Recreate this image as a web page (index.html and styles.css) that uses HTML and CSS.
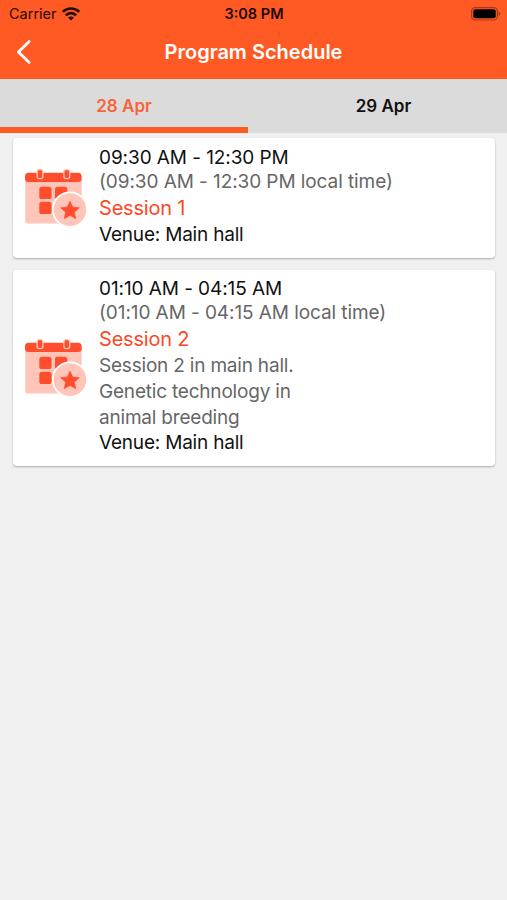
FILE: index.html
```html
<!DOCTYPE html>
<html lang="en">
<head>
  <meta charset="UTF-8">
  <meta name="viewport" content="width=device-width, initial-scale=1.0">
  <title>Program Schedule</title>
  <link rel="stylesheet" href="styles.css">
</head>
<body>
  <header>
    <div class="status-bar">
      <div class="carrier">
        <span>Carrier</span>
        <svg width="18" height="14" viewBox="0 0 18 14" fill="none" stroke="#240c03" stroke-width="2.6">
          <path d="M.8 4.9a11.6 11.6 0 0 1 16.4 0"/>
          <path d="M3.8 8.3a7.3 7.3 0 0 1 10.4 0"/>
          <path d="M9 13.6L6.1 10.7a4 4 0 0 1 5.8 0z" fill="#240c03" stroke="none"/>
        </svg>
      </div>
      <span class="clock">3:08 PM</span>
      <svg class="battery" width="30" height="14" viewBox="0 0 30 14">
        <rect x="0.6" y="0.6" width="25.8" height="12.4" rx="3.6" fill="none" stroke="#a63a18" stroke-width="1.2"/>
        <rect x="2.3" y="2.3" width="22.4" height="9" rx="2" fill="#000"/>
        <path d="M27.6 4.7c2.2.7 2.2 3.5 0 4.2z" fill="#a63a18"/>
      </svg>
    </div>
    <div class="nav-bar">
      <svg class="back" width="16" height="26" viewBox="0 0 16 26" fill="none" stroke="#fff" stroke-width="2.8" stroke-linecap="round" stroke-linejoin="round">
        <path d="M13.2 2.6L2.4 13l10.8 10.4"/>
      </svg>
      <h1>Program Schedule</h1>
    </div>
  </header>

  <nav class="tabs">
    <a class="tab active">28 Apr</a>
    <a class="tab">29 Apr</a>
  </nav>

  <!-- calendar icon used by every session -->
  <svg class="sprite" width="0" height="0">
    <symbol id="calendar" viewBox="0 0 64 60">
      <path d="M1.3 9h56.4v44.5a2 2 0 0 1-2 2H3.3a2 2 0 0 1-2-2z" fill="#ffc5b9"/>
      <rect x="1" y="4.7" width="56.6" height="9.3" rx="3.5" fill="#ff4d2e"/>
      <rect x="13.1" y="1.7" width="5.8" height="8.9" rx="2" fill="#ff4d2e" stroke="#ffc5b9" stroke-width="1.3"/>
      <rect x="39.9" y="1.7" width="5.8" height="8.9" rx="2" fill="#ff4d2e" stroke="#ffc5b9" stroke-width="1.3"/>
      <rect x="15.3" y="18.8" width="12.3" height="12.2" rx="2.6" fill="#ff4d2e"/>
      <rect x="31" y="18.8" width="12.3" height="12.2" rx="2.6" fill="#ff4d2e"/>
      <rect x="15.3" y="33.8" width="12.3" height="12.2" rx="2.6" fill="#ff4d2e"/>
      <circle cx="46" cy="41.6" r="17.2" fill="#ffc5b9" stroke="#fff" stroke-width="1.8"/>
      <path d="M46 33l2.7 6 6.6.7-4.9 4.5 1.4 6.5-5.8-3.3-5.8 3.3 1.4-6.5-4.9-4.5 6.6-.7z" fill="#ff4d2e" stroke="#ff4d2e" stroke-width=".6" stroke-linejoin="round"/>
    </symbol>
  </svg>

  <main>
    <div class="card">
      <svg class="icon"><use href="#calendar"/></svg>
      <div class="info">
        <div class="time">09:30 AM - 12:30 PM</div>
        <div class="local">(09:30 AM - 12:30 PM local time)</div>
        <div class="title">Session 1</div>
        <div class="venue">Venue: Main hall</div>
      </div>
    </div>

    <div class="card">
      <svg class="icon"><use href="#calendar"/></svg>
      <div class="info">
        <div class="time">01:10 AM - 04:15 AM</div>
        <div class="local">(01:10 AM - 04:15 AM local time)</div>
        <div class="title">Session 2</div>
        <div class="description">Session 2 in main hall.<br>Genetic technology in<br>animal breeding</div>
        <div class="venue">Venue: Main hall</div>
      </div>
    </div>
  </main>
</body>
</html>
```

FILE: styles.css
```css
* {
  box-sizing: border-box;
}

body {
  margin: 0;
  min-height: 100vh;
  background-color: #f0f0f0;
  color: #111;
  font-family: 'Inter', 'Liberation Sans', sans-serif;
}

header {
  height: 79px;
  background-color: #ff5a23;
}

.status-bar {
  display: grid;
  grid-template-columns: 1fr auto 1fr;
  align-items: center;
  height: 27px;
  padding: 0 6px 0 9px;
  color: #240c03;
  font-size: 14.5px;
}

.carrier {
  display: flex;
  align-items: center;
  gap: 5px;
}

.clock {
  margin-right: 2px;
  font-weight: 600;
  color: #1c0a03;
}

.battery {
  justify-self: end;
}

.nav-bar {
  display: grid;
  grid-template-columns: 40px 1fr 40px;
  align-items: center;
  height: 50px;
}

.back {
  margin-left: 16px;
}

h1 {
  margin: 0;
  color: #fff;
  font-size: 20px;
  font-weight: 600;
  text-align: center;
}

.tabs {
  display: flex;
  height: 54px;
  background-color: #dbdbdb;
}

.tab {
  width: 248px;
  padding-top: 5px;
  border-bottom: 6px solid transparent;
  color: #111;
  font-size: 17px;
  font-weight: 600;
  line-height: 44px;
  text-align: center;
}

.tab:last-child {
  flex: 1;
  padding-left: 12px;
}

.tab.active {
  color: #f9633a;
  border-bottom-color: #ff5a23;
}

.sprite {
  display: block;
}

main {
  display: flex;
  flex-direction: column;
  gap: 12px;
  padding: 5px 12px 0 13px;
}

.card {
  display: flex;
  align-items: center;
  padding: 8px 11px 10px;
  background-color: #fff;
  border-radius: 4px;
  box-shadow: 0 1px 2px rgba(0, 0, 0, 0.3);
}

.card + .card {
  padding: 7px 11px 10px;
}

.icon {
  flex: none;
  width: 64px;
  height: 60px;
  margin: 2px 11px 0 0;
}

.info {
  font-size: 19px;
  line-height: 26px;
  letter-spacing: -0.2px;
}

.time, .local {
  line-height: 24px;
  letter-spacing: -0.08px;
}

.local, .description {
  color: #666;
}

.description {
  line-height: 25.8px;
}

.title {
  margin: 1px 0;
  color: #fa4927;
  font-size: 20px;
}
```
